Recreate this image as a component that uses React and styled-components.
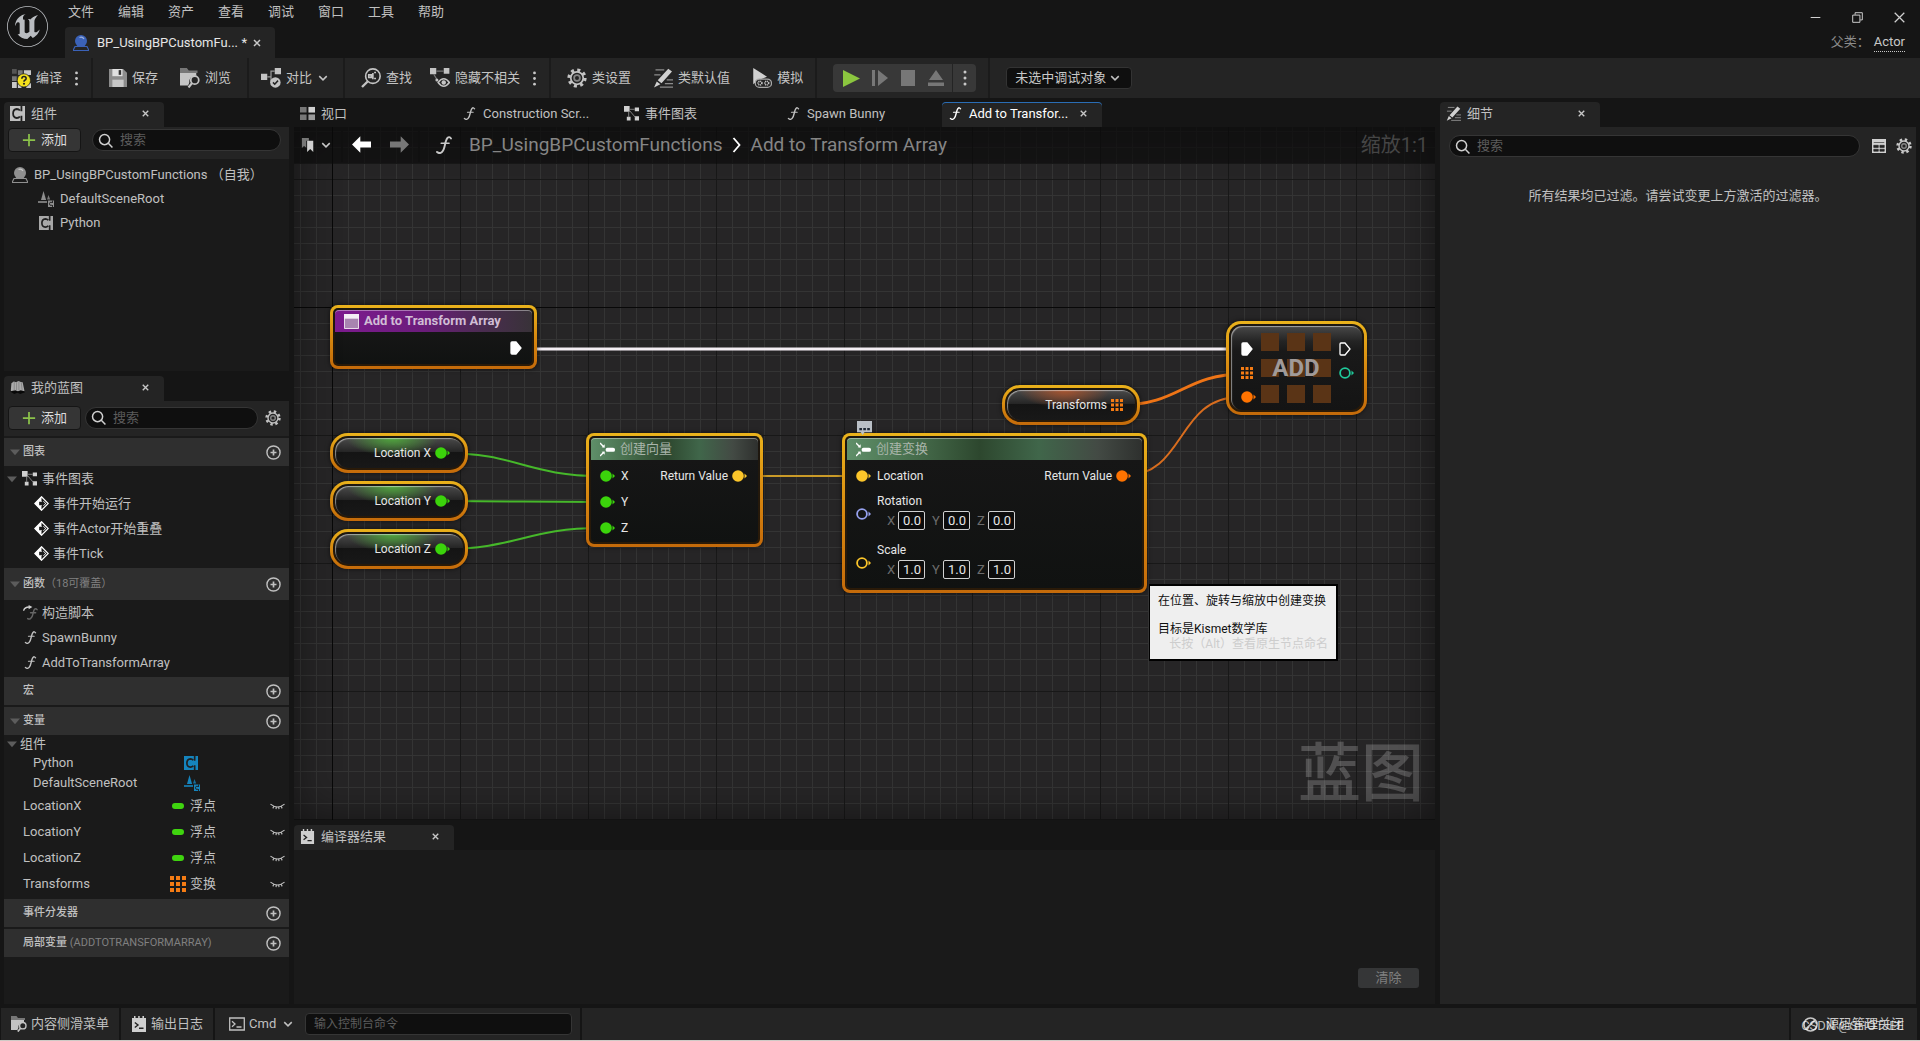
import React from 'react';
import styled, { createGlobalStyle, css } from 'styled-components';
import { SiUnrealengine } from 'react-icons/si';

const GlobalStyle = createGlobalStyle`
    *, *::before, *::after {
        box-sizing: border-box;
    }
    body {
        margin: 0;
        background: #151515;
        color: #c0c0c0;
        font-family: Roboto, 'Noto Sans CJK SC', sans-serif;
        font-size: 13px;
        line-height: 18px;
    }
    button, input, select {
        font: inherit;
        color: inherit;
        margin: 0;
    }
    button {
        display: inline-flex;
        align-items: center;
        padding: 0;
        border: 0;
        background: none;
        white-space: nowrap;
    }
    ul {
        list-style: none;
        margin: 0;
        padding: 0;
    }
    svg {
        display: block;
        flex: none;
    }
`;

/* ---------- icons ---------- */

const icons = {
    close: <path d="M4 4l8 8M12 4l-8 8" stroke="currentColor" strokeWidth="2" />,
    chevron: <path d="M3 5.5l5 5 5-5" fill="none" stroke="currentColor" strokeWidth="2" />,
    chevronRight: <path d="M4.500 1l6 7-6 7" fill="none" stroke="currentColor" strokeWidth="1.8" />,
    caret: <path d="M0 4h16L8 13z" fill="#5c5c5c" />,
    dots: (
        <g fill="currentColor">
            <circle cx="8" cy="2" r="1.5" />
            <circle cx="8" cy="8" r="1.5" />
            <circle cx="8" cy="14" r="1.5" />
        </g>
    ),
    plus: <path d="M8 1v14M1 8h14" stroke="#8bc24a" strokeWidth="2" />,
    search: (
        <g fill="none" stroke="currentColor" strokeWidth="1.6">
            <circle cx="7" cy="7" r="5.4" />
            <path d="M11 11l4.4 4.4" />
        </g>
    ),
    plusCircle: (
        <g fill="none" stroke="currentColor" strokeWidth="1.5">
            <circle cx="8" cy="8" r="7" />
            <path d="M8 4.8v6.4M4.8 8h6.4" strokeWidth="1.8" />
        </g>
    ),
    gear: (
        <g fill="none" stroke="currentColor">
            <circle cx="8" cy="8" r="6.4" strokeWidth="2.6" strokeDasharray="2.4 2.627" />
            <circle cx="8" cy="8" r="5" strokeWidth="1.4" />
            <circle cx="8" cy="8" r="2.3" strokeWidth="1.4" stroke="#858585" />
        </g>
    ),
    compile: (
        <g>
            <path d="M0 0h4v4H0z" fill="#555" />
            <path d="M5 1h4v4H5zM0 6h4v4H0z" fill="#777" />
            <path d="M10 1h6v4h-6zM0 11h4v5H0zM5 6h4v4H5zM12 12h4v4h-4zM5 12h3v4H5z" fill="#c8c8c8" />
            <circle cx="10" cy="9.6" r="5.6" fill="#f5e11c" stroke="#1e1e1e" strokeWidth=".6" />
            <path d="M8.3 8.3q0-1.9 1.8-1.9t1.8 1.6q0 1-1.1 1.5-.7.4-.7 1.2" fill="none" stroke="#222" strokeWidth="1.3" />
            <circle cx="10.1" cy="12.4" r=".9" fill="#222" />
        </g>
    ),
    save: (
        <g fill="#bdbdbd">
            <path d="M0 0h12.6L16 3.4V16H0z" fill="#8c8c8c" />
            <path d="M3 0h9v6.4H3z" fill="#e0e0e0" />
            <path d="M8.6 1h2.2v4.2H8.600z" fill="#333" />
            <path d="M3 9.5h10V16H3z" fill="#c8c8c8" />
        </g>
    ),
    browse: (
        <g>
            <path d="M0 0h5.5l1.5 2h7v2H0z" fill="#777" />
            <path d="M0 4h13v2.2A5 5 0 007.400 12l-1 2H0z" fill="#c4c4c4" />
            <circle cx="11.800" cy="9.700" r="3.200" fill="none" stroke="#c4c4c4" strokeWidth="1.400" />
            <path d="M9.500 12.200L6.800 15.600" stroke="#c4c4c4" strokeWidth="1.700" />
        </g>
    ),
    diff: (
        <g fill="#c4c4c4">
            <path d="M0 4.500h5v5H0zM11 0h5v5h-5z" />
            <path d="M5 7h3V2.500h3M8 7v4" fill="none" stroke="#9a9a9a" />
            <circle cx="11.500" cy="11.500" r="4.200" />
            <path d="M9.600 11.500l1.400 1.500 2.600-2.900" fill="none" stroke="#242424" strokeWidth="1.200" />
        </g>
    ),
    find: (
        <g fill="none" stroke="#c4c4c4" strokeWidth="1.300">
            <circle cx="9.500" cy="6.500" r="5.800" />
            <path d="M5.300 10.800L.8 15.200" strokeWidth="1.900" />
            <path d="M6.200 5.500h2v2h-2zM10.500 3.600h1.500M10.500 8.400h1.500M8.300 6.500h1.200v-2.500M9.500 6.500V9" />
        </g>
    ),
    hide: (
        <g fill="#c4c4c4">
            <path d="M0 0h5v5H0zM11 0h4.500v4.500H11z" />
            <path d="M5 2.500h6M3 5l3 5" stroke="#777" fill="none" />
            <circle cx="5.500" cy="9.500" r="1.200" />
            <path d="M6.500 11.600q4.500-6 9 0q-4.500 6-9 0z" fill="none" stroke="#c4c4c4" strokeWidth="1.200" />
            <circle cx="11" cy="11.600" r="1.800" />
        </g>
    ),
    pencil: (
        <g>
            <path d="M2 1.500h7M1 5.500h5M11 9.500h5M9.500 12.500h6.500M5.500 15.300H16" stroke="#8c8c8c" strokeWidth="1" />
            <path d="M12.200.5l3 2.300-8.400 9.400-3-2.400zM3 10.700l2.900 2.300L.8 15.600z" fill="#d0d0d0" />
        </g>
    ),
    simulate: (
        <g>
            <path d="M1 0l11 7-4 1.500L4.500 10 1 13z" fill="#d0d0d0" />
            <rect x="2.600" y="8.800" width="13" height="6.700" rx="3.300" fill="#242424" stroke="#a8a8a8" />
            <circle cx="6.400" cy="12.100" r="1.500" fill="none" stroke="#c8c8c8" strokeWidth="1.300" strokeDasharray=".8 .5" />
            <circle cx="11.800" cy="12.100" r="1.500" fill="none" stroke="#c8c8c8" strokeWidth="1.300" strokeDasharray=".8 .5" />
        </g>
    ),
    play: <path d="M0 0l16 8-16 8z" fill="#8bc63f" />,
    step: <path d="M0 0h3v16H0zM6 0l10 8-10 8z" fill="#777" />,
    stop: <path d="M1 0h14v16H1z" fill="#777" />,
    eject: <path d="M8 0l7 10H1zM0 12.500h16V16H0z" fill="#777" />,
    component: (
        <g>
            <path d="M0 0h16v16H0z" fill="currentColor" />
            <path d="M10.500 4.800Q9.300 3.200 7.300 3.200 3.300 3.500 3.300 8t4 4.800q2 0 3.200-1.600M12.200 0v5.500M12.200 16v-5.500" fill="none" stroke="#202020" strokeWidth="1.900" />
        </g>
    ),
    actor: (
        <g>
            <path d="M0 15.500l2-4h12l2 4z" fill="none" stroke="currentColor" strokeWidth="1.200" />
            <circle cx="8" cy="6" r="6" fill="currentColor" />
            <path d="M6.500 2.500q3-1.200 4.500 1.500" fill="none" stroke="#fff" strokeOpacity=".5" strokeWidth="1.200" />
        </g>
    ),
    scene: (
        <g fill="currentColor">
            <path d="M5.500 0l2.600 9H3z" />
            <path d="M10.500 4l1.700 4.500h-3.200zM0 10h9v2H0z" opacity=".8" />
            <path d="M10 9.500h6V16h-6z" />
            <path d="M14 11.400q-2.600-.8-2.600 1.400t2.600 1.500M14.500 9.500v2.500M14.500 16v-2" fill="none" stroke="#1c1c1c" strokeWidth=".9" />
        </g>
    ),
    book: (
        <g>
            <path d="M0 12l2-3h12l2 4-5 2-3-1.500L4.500 15z" fill="#080808" />
            <path d="M1.500 3.500L4 1.500l2.500.8L9 1l2.500 1 2 .5L15.500 12l-4-1.200-3 1.200-3-1.200L.8 12z" fill="#ababab" />
            <path d="M4.500 2v9M7 2.500V11M9.500 1.500V11M12 2.500l1 8.500" stroke="#7c7c7c" strokeWidth=".8" fill="none" />
        </g>
    ),
    graph: (
        <g fill="#d0d0d0">
            <path d="M0 0h6v6H0zM11.500 1.500H16v4h-4.500zM3 11.500h4v4H3zM11.500 11h4.500v4.500h-4.500z" />
            <path d="M6 3.500h5.500M5 6v6M6 5l6 7" stroke="#888" fill="none" />
        </g>
    ),
    viewport: (
        <g>
            <path d="M0 1h7v6H0zM0 9h7v6H0z" fill="#777" />
            <path d="M9 1h7v6H9z" fill="#d0d0d0" />
            <path d="M9 9h7v6H9z" fill="#999" />
        </g>
    ),
    fn: (
        <g fill="none" stroke="currentColor" strokeLinecap="round">
            <path d="M14.200 2.200Q12.800 0 11 1.800 9.800 3.200 8.800 8T6.200 14.200Q4 16.200 1.800 14.200" strokeWidth="1.700" />
            <path d="M5.500 6.500h7" strokeWidth="1.400" />
        </g>
    ),
    override: (
        <g fill="none" stroke="#666" strokeLinecap="round">
            <path d="M15 5Q13.500 3 12 5 11 7 10.500 10T8 14.500q-1.500 1-3 0M8 8.200h5.500" strokeWidth="1.500" />
            <path d="M.8 5.500Q2 2 7 2.200" stroke="#d0d0d0" strokeWidth="1.500" />
            <path d="M6 0l4 2.200L6 4.600z" fill="#d0d0d0" stroke="none" />
        </g>
    ),
    event: (
        <g>
            <path d="M8 .8L15.200 8 8 15.200.8 8z" fill="none" stroke="#fff" strokeWidth="1.300" />
            <path d="M8 .8V5.500h2.500L13 8l-2.500 2.500H8v4.700L.8 8z" fill="#fff" />
            <path d="M5.500 6.200h3V4.500L12 8l-3.500 3.500V9.800h-3z" fill="#1a1a1a" />
        </g>
    ),
    bookmark: (
        <g>
            <path d="M1 0h8v3H6v8l-2.500-2L1 11.500z" fill="#777" />
            <path d="M7 3h7v13l-3.500-3.500L7 16z" fill="#d0d0d0" />
        </g>
    ),
    back: <path d="M0 8l7-7v4.500h9v5H7V15z" fill="currentColor" />,
    forward: <path d="M16 8L9 1v4.500H0v5h9V15z" fill="currentColor" />,
    log: (
        <g>
            <path d="M1 2h2V0h1.500v2h2.700V0h1.500v2h2.700V0H13v2h2v14H1z" fill="#cfcfcf" />
            <path d="M3.800 6.500L7 9l-3.200 2.500M8 12.300h4.500" fill="none" stroke="#222" strokeWidth="1.400" />
        </g>
    ),
    terminal: (
        <g fill="none" stroke="currentColor" strokeWidth="1.300">
            <path d="M.7 2h14.600v12H.7z" />
            <path d="M3 5.300L6 8l-3 2.700M7.500 11h5" />
        </g>
    ),
    layout: (
        <g>
            <path d="M0 0h16v16H0z" fill="#d0d0d0" />
            <path d="M2 4h12M2 7.200h5.200v2.500H2zM9 7.200h5v2.500H9zM2 11.700h5.200v2.300H2zM9 11.700h5v2.300H9z" fill="#242424" stroke="#242424" strokeWidth=".7" />
        </g>
    ),
    minimize: <path d="M1 8h14" stroke="currentColor" strokeWidth="1.500" />,
    restore: <path d="M1 4.500h10.500V15H1zM4.500 4V1H15v10.500h-3" fill="none" stroke="currentColor" strokeWidth="1.400" />,
    exit: <path d="M1 1l14 14M15 1L1 15" stroke="currentColor" strokeWidth="1.800" />,
    eye: (
        <g fill="none" stroke="currentColor" strokeWidth="1.200">
            <path d="M.5 5.500q7.500 6 15 0M4 8l-1 2M6.700 8.800l-.3 2M9.300 8.800l.3 2M12 8l1 2" />
        </g>
    ),
    array: (
        <path
            d="M0 0h4v4H0zM6 0h4v4H6zM12 0h4v4h-4zM0 6h4v4H0zM6 6h4v4H6zM12 6h4v4h-4zM0 12h4v4H0zM6 12h4v4H6zM12 12h4v4h-4z"
            fill="#f57c14"
        />
    ),
    pill: <rect x="0" y="4" width="16" height="8" rx="4" fill="#3fd40f" />,
    off: (
        <g fill="none" stroke="currentColor" strokeWidth="1.700">
            <circle cx="8" cy="8" r="7" />
            <path d="M13 3L3 13" />
        </g>
    ),
    make: (
        <g fill="#fff" stroke="#fff">
            <path d="M0 1l4 4M0 15l4-4" strokeWidth="1.500" />
            <path d="M5 6V2.500L1.800 5.700zM5 10v3.500L1.800 10.300z" stroke="none" />
            <rect x="6" y="6" width="10" height="4.500" rx="2" stroke="none" />
        </g>
    ),
    entry: (
        <g>
            <path d="M.5.5h15v15H.500z" fill="#a884b0" stroke="#efe6f0" />
            <path d="M0 0h16v5H0z" fill="#f4eef5" />
        </g>
    ),
    bubble: (
        <g>
            <path d="M0 1h16v12H8l-2 3-2-3H0z" fill="#b9bfc6" />
            <path d="M2.500 8.500h2.800v2.500H2.500zM6.700 8.500h2.800v2.500H6.700zM10.900 8.500h2.800v2.500h-2.800z" fill="#1e2733" />
        </g>
    )
};

const Icon = ({ name, size = 16, color }) => (
    <svg width={size} height={size} viewBox="0 0 16 16" color={color} aria-hidden="true">
        {icons[name]}
    </svg>
);

const pinColors = {
    float: '#3bd40b',
    vector: '#fcc62a',
    rotator: '#97a2f0',
    transform: '#ff7300',
    int: '#1fc99a'
};

const Pin = ({ type, open }) => {
    if (type === 'exec') {
        return (
            <svg width="12" height="14" viewBox="0 0 12 14" aria-hidden="true">
                <path d="M1 2q0-1 1-1h4l5 6-5 6H2q-1 0-1-1z" fill={open ? 'none' : '#fff'} stroke="#fff" strokeWidth="1.3" />
            </svg>
        );
    }
    if (type === 'array') return <Icon name="array" size={12} />;
    const color = pinColors[type];
    return (
        <svg width="16" height="12" viewBox="0 0 16 12" aria-hidden="true">
            <circle cx="6" cy="6" r={open ? 4.9 : 5.8} fill={open ? 'none' : color} stroke={color} strokeWidth={open ? 1.8 : 0} />
            <path d="M12.500 3.500L15 6l-2.500 2.500z" fill={color} />
        </svg>
    );
};

/* ---------- window frame ---------- */

const Page = styled.div`
    display: flex;
    flex-direction: column;
    min-height: 100vh;
    border-bottom: 1px solid #cfcac6;
`;

const TitleBar = styled.header`
    display: flex;
    height: 58px;
    padding-left: 7px;
`;

const Logo = styled.div`
    width: 58px;
    padding-top: 6px;
    color: #b9bcc0;
`;

const TitleMain = styled.div`
    flex: 1;
`;

const Menu = styled.nav`
    display: flex;
    gap: 24px;
    height: 27px;
    padding: 3px 3px 0;
    align-items: flex-start;
`;

const FileTab = styled.div`
    display: flex;
    align-items: center;
    width: 210px;
    height: 31px;
    padding: 0 12px 0 8px;
    border-radius: 4px 4px 0 0;
    background: #242424;
    color: #e6e6e6;
`;

const FileName = styled.span`
    flex: 1;
    margin-left: 8px;
`;

const Dirty = styled.span`
    margin-right: 4px;
`;

const WindowInfo = styled.div`
    display: flex;
    flex-direction: column;
    align-items: flex-end;
    gap: 7px;
    padding: 9px 15px 0 0;
    color: #d0d0d0;
`;

const WindowButtons = styled.div`
    display: flex;
    gap: 31px;
    height: 17px;
`;

const ParentClass = styled.div`
    display: flex;
    gap: 4px;
    color: #8c8c8c;

    a {
        color: #c8c8c8;
        text-decoration: none;
        border-bottom: 1px dotted #c8c8c8;
    }
`;

const Toolbar = styled.div`
    display: flex;
    height: 40px;
    background: #242424;
`;

const ToolGroup = styled.div`
    display: flex;
    align-items: center;
    gap: ${({ $gap }) => $gap || 22}px;
    padding: 0 ${({ $end }) => $end || 12}px 0 ${({ $start }) => $start || 16}px;
    border-right: 2px solid #1b1b1b;
`;

const ToolButton = styled.button`
    gap: 5px;
    color: #c4c4c4;
`;

const DotsButton = styled.button`
    width: 6px;
    margin-left: -7px;
    justify-content: center;
    color: #c8c8c8;
`;

const PlayControls = styled.div`
    display: flex;
    align-items: center;
    gap: 12px;
    height: 28px;
    padding-left: 10px;
    border-radius: 4px;
    background: #383838;
`;

const PlayMore = styled.button`
    justify-content: center;
    width: 24px;
    height: 28px;
    margin-left: -4px;
    border-left: 1px solid #242424;
    color: #c8c8c8;
`;

const SelectBox = styled.label`
    position: relative;
    display: inline-flex;
    align-items: center;

    svg {
        position: absolute;
        right: ${({ $arrow }) => $arrow}px;
        pointer-events: none;
    }
`;

const DebugSelect = styled.select`
    appearance: none;
    width: 126px;
    height: 22px;
    padding: 0 8px;
    border: 1px solid #333;
    border-radius: 4px;
    background: #0f0f0f;
    color: #c8c8c8;
    line-height: 18px;
`;

const DebugArea = styled.div`
    display: flex;
    align-items: center;
    padding-left: 16px;
`;

/* ---------- panels ---------- */

const Workspace = styled.main`
    flex: 1;
    display: grid;
    grid-template-columns: 285px minmax(0, 1fr) 476px;
    gap: 5px;
    padding: 4px;
`;

const Column = styled.div`
    display: flex;
    flex-direction: column;
    gap: 5px;
    min-width: 0;
`;

const Panel = styled.section`
    display: flex;
    flex-direction: column;
    min-height: ${({ $height }) => ($height ? `${$height}px` : 0)};
    flex: ${({ $height }) => ($height ? 'none' : '1')};
`;

const PanelBody = styled.div`
    flex: 1;
    background: ${({ $light }) => ($light ? '#242424' : '#1a1a1a')};
`;

const BlueprintBody = styled(PanelBody)`
    padding-top: 2px;
`;

const TabStrip = styled.div`
    display: flex;
    gap: 2px;
    height: 25px;
`;

const TabBox = styled.button`
    width: 160px;
    height: 25px;
    padding: 0 13px 2px 5px;
    border-radius: 4px 4px 0 0;
    color: #c0c0c0;
    ${({ $active }) =>
        $active &&
        css`
            background: #242424;
        `}
    ${({ $focused }) =>
        $focused &&
        css`
            color: #fff;
            box-shadow: inset 0 1px #2a6db5;
        `}
`;

const TabIcon = styled.span`
    display: flex;
    justify-content: center;
    width: 16px;
    margin-right: 6px;
`;

const TabLabel = styled.span`
    flex: 1;
    text-align: left;
`;

const Tab = ({ icon, label, active, focused }) => (
    <TabBox $active={active} $focused={focused}>
        <TabIcon>
            <Icon name={icon} size={icon === 'fn' ? 13 : 15} />
        </TabIcon>
        <TabLabel>{label}</TabLabel>
        {active && <Icon name="close" size={11} color="#c8c8c8" />}
    </TabBox>
);

const SearchStrip = styled.div`
    display: flex;
    align-items: ${({ $tall }) => ($tall ? 'center' : 'flex-start')};
    height: ${({ $tall }) => ($tall ? 35 : 32)}px;
    padding: ${({ $tall }) => ($tall ? '0 8px 2px 4px' : '1px 8px 0 4px')};
    background: #242424;
`;

const AddButton = styled.button`
    flex: none;
    justify-content: center;
    gap: 5px;
    width: 73px;
    height: 24px;
    border: 1px solid #151515;
    border-radius: 4px;
    background: #353535;
    color: #dcdcdc;
`;

const SearchBox = styled.label`
    flex: 1;
    display: flex;
    align-items: center;
    min-width: 0;
    height: 22px;
    margin: ${({ $margin }) => $margin || '0'};
    padding: 0 5px;
    border: 1px solid #353535;
    border-radius: 11px;
    background: #0f0f0f;
    color: #d0d0d0;
`;

const SearchInput = styled.input`
    flex: 1;
    min-width: 0;
    margin-left: 7px;
    padding: 0;
    border: 0;
    outline: 0;
    background: none;

    &::placeholder {
        color: #5c5c5c;
        opacity: 1;
    }
`;

const Search = ({ margin }) => (
    <SearchBox $margin={margin}>
        <Icon name="search" size={15} />
        <SearchInput type="text" placeholder="搜索" aria-label="搜索" />
    </SearchBox>
);

const ComponentList = styled.ul`
    padding-top: 4px;
`;

const TreeRow = styled.li`
    display: flex;
    align-items: center;
    height: ${({ $height }) => $height || 25}px;
    padding-left: ${({ $indent }) => $indent || 0}px;
    gap: ${({ $gap }) => $gap || 4}px;
    white-space: nowrap;
`;

const Section = styled.section`
    margin-bottom: 2px;
`;

const SectionHeader = styled.h3`
    display: flex;
    align-items: center;
    gap: 3px;
    height: ${({ $tall }) => ($tall ? 32 : 28)}px;
    margin: 0;
    padding: 0 8px 0 6px;
    background: #2f2f2f;
    font-size: 11px;
    font-weight: 500;

    small {
        font-size: 11px;
        font-weight: 400;
        color: #808080;
    }
`;

const SectionTitle = styled.span`
    flex: 1;
`;

const CaretSlot = styled.span`
    width: 10px;
`;

const VariableName = styled.span`
    width: ${({ $width }) => $width}px;
`;

const TypeIcon = styled.span`
    display: flex;
    justify-content: center;
    width: 17px;
`;

const Visibility = styled.button`
    margin: 0 4px 0 auto;
`;

const BlueprintSection = ({ title, note, open, tall, children }) => (
    <Section>
        <SectionHeader $tall={tall}>
            <CaretSlot>{open && <Icon name="caret" size={10} />}</CaretSlot>
            <SectionTitle>
                {title}
                {note && <small>{note}</small>}
            </SectionTitle>
            <button aria-label={`添加${title}`}>
                <Icon name="plusCircle" size={15} />
            </button>
        </SectionHeader>
        {children && <ul>{children}</ul>}
    </Section>
);

/* ---------- graph ---------- */

const Canvas = styled.div`
    position: relative;
    flex: 1;
    overflow: hidden;
    background:
        linear-gradient(#080808, #080808) 38px 0 / 1px 100% no-repeat,
        linear-gradient(#080808, #080808) 0 180px / 100% 1px no-repeat,
        linear-gradient(90deg, #181818 1px, transparent 1px) 38px 0 / 128px 100%,
        linear-gradient(#181818 1px, transparent 1px) 0 52px / 100% 128px,
        linear-gradient(90deg, #343434 1px, transparent 1px) 6px 0 / 16px 100%,
        linear-gradient(#343434 1px, transparent 1px) 0 4px / 100% 16px,
        #262526;

    &::after {
        content: '';
        position: absolute;
        inset: 0;
        box-shadow: inset 0 0 40px rgba(0, 0, 0, 0.5);
        pointer-events: none;
    }
`;

const CanvasHeader = styled.div`
    position: relative;
    z-index: 2;
    display: flex;
    align-items: center;
    height: 37px;
    padding: 0 7px 2px;
    background: rgba(12, 12, 12, 0.7);
    font-size: 19px;
    line-height: 28px;
    color: #858585;
`;

const HeaderTools = styled.div`
    display: flex;
    align-items: center;
    gap: ${({ $gap }) => $gap}px;
    height: 34px;
    padding: 0 9px;
    border-right: 2px solid #101010;

    &:first-child {
        padding-left: 0;
    }
`;

const Crumbs = styled.div`
    display: flex;
    align-items: center;
    flex: 1;
    gap: 6px;
    padding-left: 15px;

    svg:first-child {
        margin-right: 10px;
    }
`;

const ZoomLevel = styled.span`
    font-size: 20px;
    color: #454545;
`;

const Wires = styled.svg`
    position: absolute;
    inset: 0;
    width: 100%;
    height: 100%;
    fill: none;
`;

const GraphName = styled.div`
    position: absolute;
    right: 11px;
    bottom: 6px;
    font-size: 63px;
    line-height: 80px;
    font-weight: 500;
    color: rgba(255, 255, 255, 0.2);
`;

const NodeBox = styled.div`
    position: absolute;
    left: ${({ $x }) => $x}px;
    top: ${({ $y }) => $y}px;
    width: ${({ $w }) => $w}px;
    padding: 2px;
    border: 3px solid transparent;
    border-radius: ${({ $round }) => $round || 8}px;
    background:
        linear-gradient(#1c1710, #2a1a08) padding-box,
        linear-gradient(#eab31c, #d98a10 50%, #c46a0a) border-box;
    box-shadow: 0 0 5px rgba(0, 0, 0, 0.6);
    color: #e6e6e6;
    font-size: 12px;
`;

const NodeHeader = styled.div`
    display: flex;
    align-items: center;
    gap: 5px;
    height: 22px;
    padding-left: 9px;
    border-radius: 4px 4px 0 0;
    box-shadow: inset 0 1px rgba(255, 255, 255, 0.4);
    color: ${({ $event }) => ($event ? '#d0bdd5' : '#a9b5aa')};
    font-size: 13px;
    font-weight: ${({ $event }) => ($event ? 700 : 400)};
    background: ${({ $event }) =>
        $event
            ? 'linear-gradient(90deg, #7d1b8f, #6b1c7b 45%, #4a2c50 75%, #383238)'
            : 'linear-gradient(90deg, #5f8f69, #4a7250 20%, #2d472e 45%, #40664a 65%, #434a44 85%, #2e302e)'};
`;

const NodeBody = styled.div`
    min-height: ${({ $min }) => $min || 0}px;
    padding: 3px 0 1px;
    border-radius: 0 0 4px 4px;
    background: linear-gradient(#161616, #101211);
`;

const PinRow = styled.div`
    display: flex;
    align-items: center;
    justify-content: space-between;
    height: 26px;
    padding: 0 10px 0 9px;
`;

const PinLabel = styled.span`
    display: flex;
    align-items: center;
    gap: ${({ $out }) => ($out ? 4 : 5)}px;
    margin-left: ${({ $out }) => ($out ? 'auto' : 0)};
`;

const StructPin = styled.div`
    display: flex;
    align-items: center;
    gap: 5px;
    height: 49px;
    padding-left: 9px;
`;

const StructFields = styled.div`
    padding-bottom: 4px;
`;

const StructLabel = styled.div`
    height: 18px;
    line-height: 17px;
`;

const AxisFields = styled.div`
    display: flex;
    gap: 7px;
    padding-left: 10px;
`;

const AxisField = styled.label`
    display: flex;
    align-items: center;
    color: #6c6c6c;
    font-size: 13px;

    span {
        width: 11px;
    }

    input {
        width: 27px;
        height: 19px;
        padding: 0 3px;
        border: 1px solid #d0d0d0;
        border-radius: 2px;
        background: #0c0c0c;
        color: #e6e6e6;
        text-align: right;
    }
`;

const VariableBody = styled.div`
    display: flex;
    align-items: center;
    justify-content: flex-end;
    gap: 4px;
    height: 30px;
    padding-right: 12px;
    border-radius: 13px;
    box-shadow: inset 1px 1px 1px rgba(255, 255, 255, 0.5);
    background:
        radial-gradient(ellipse 46px 18px at 45% 0, ${({ $tint }) => $tint}, transparent),
        linear-gradient(#4a4a4a, #262626 45%, #141414 46%, #181818);
`;

const AddBody = styled.div`
    display: flex;
    height: 84px;
    padding-left: 10px;
    border-radius: 11px;
    box-shadow: inset 1px 1px 1px rgba(255, 255, 255, 0.5);
    background: linear-gradient(#484848, #242424 18%, #191919 30%, #141414);
`;

const PinColumn = styled.div`
    display: flex;
    flex-direction: column;
    width: 20px;
    padding-top: 11px;

    span {
        display: flex;
        align-items: center;
        height: 24px;
    }
`;

const AddArt = styled.div`
    display: grid;
    align-items: center;
    justify-items: center;
    margin-right: 8px;

    > * {
        grid-area: 1 / 1;
    }
`;

const AddTitle = styled.strong`
    font-size: 24px;
    line-height: 28px;
    color: #a09a98;
`;

const Bubble = styled.div`
    position: absolute;
    left: 563px;
    top: 293px;
`;

const Tooltip = styled.div`
    position: absolute;
    z-index: 3;
    left: 855px;
    top: 457px;
    width: 189px;
    height: 77px;
    padding: 6px 8px;
    border: 2px solid #000;
    border-left-width: 1px;
    background: #efefef;
    color: #101010;
    font-size: 12px;
    line-height: 18px;

    p {
        margin: 0 0 10px;
    }

    small {
        display: block;
        margin-top: -13px;
        font-size: 12px;
        text-align: right;
        color: #cdcdcd;
    }
`;

const variableNodes = [
    { name: 'Location X', x: 36, y: 306 },
    { name: 'Location Y', x: 36, y: 354 },
    { name: 'Location Z', x: 36, y: 402 },
    { name: 'Transforms', x: 708, y: 258, array: true }
];

const VariableNode = ({ name, x, y, array }) => (
    <NodeBox $x={x} $y={y} $w={138} $round={18}>
        <VariableBody $tint={array ? '#a8542e' : '#4fa63c'}>
            {name}
            <Pin type={array ? 'array' : 'float'} />
        </VariableBody>
    </NodeBox>
);

const StructInput = ({ label, type, value }) => (
    <StructPin>
        <Pin type={type} open />
        <StructFields>
            <StructLabel>{label}</StructLabel>
            <AxisFields>
                {['X', 'Y', 'Z'].map(axis => (
                    <AxisField key={axis}>
                        <span>{axis}</span>
                        <input type="text" defaultValue={value} aria-label={`${label} ${axis}`} />
                    </AxisField>
                ))}
            </AxisFields>
        </StructFields>
    </StructPin>
);

const Graph = () => (
    <Canvas>
        <CanvasHeader>
            <HeaderTools $gap={5}>
                <Icon name="bookmark" size={14} color="#c8c8c8" />
                <Icon name="chevron" size={12} color="#c8c8c8" />
            </HeaderTools>
            <HeaderTools $gap={19}>
                <Icon name="back" size={19} color="#fff" />
                <Icon name="forward" size={19} color="#777" />
            </HeaderTools>
            <Crumbs>
                <Icon name="fn" size={18} color="#c8c8c8" />
                <span>BP_UsingBPCustomFunctions</span>
                <Icon name="chevronRight" size={16} color="#fff" />
                <span>Add to Transform Array</span>
            </Crumbs>
            <ZoomLevel>缩放1:1</ZoomLevel>
        </CanvasHeader>

        <GraphName>蓝图</GraphName>

        <Wires>
            <path d="M226 222H950" stroke="#f4eef4" strokeWidth="3" />
            <path d="M150 326C222 326 234 349 306 349" stroke="#46b82a" strokeWidth="2" />
            <path d="M150 374C222 374 234 375 306 375" stroke="#46b82a" strokeWidth="2" />
            <path d="M150 422C222 422 234 401 306 401" stroke="#46b82a" strokeWidth="2" />
            <path d="M446 349H564" stroke="#c99a28" strokeWidth="2" />
            <path d="M826 278C886 278 890 247 950 247" stroke="#ee7416" strokeWidth="3" />
            <path d="M830 349C892 349 882 270 946 270" stroke="#d96d1e" strokeWidth="2" />
        </Wires>

        <NodeBox $x={36} $y={178} $w={207}>
            <NodeHeader $event>
                <Icon name="entry" size={15} />
                Add to Transform Array
            </NodeHeader>
            <NodeBody $min={32}>
                <PinRow>
                    <PinLabel $out>
                        <Pin type="exec" />
                    </PinLabel>
                </PinRow>
            </NodeBody>
        </NodeBox>

        {variableNodes.map(node => (
            <VariableNode key={node.name} {...node} />
        ))}

        <NodeBox $x={292} $y={306} $w={177}>
            <NodeHeader>
                <Icon name="make" size={15} />
                创建向量
            </NodeHeader>
            <NodeBody>
                {['X', 'Y', 'Z'].map((axis, idx) => (
                    <PinRow key={axis}>
                        <PinLabel>
                            <Pin type="float" />
                            {axis}
                        </PinLabel>
                        {idx === 0 && (
                            <PinLabel $out>
                                Return Value
                                <Pin type="vector" />
                            </PinLabel>
                        )}
                    </PinRow>
                ))}
            </NodeBody>
        </NodeBox>

        <NodeBox $x={548} $y={306} $w={305}>
            <NodeHeader>
                <Icon name="make" size={15} />
                创建变换
            </NodeHeader>
            <NodeBody>
                <PinRow>
                    <PinLabel>
                        <Pin type="vector" />
                        Location
                    </PinLabel>
                    <PinLabel $out>
                        Return Value
                        <Pin type="transform" />
                    </PinLabel>
                </PinRow>
                <StructInput label="Rotation" type="rotator" value="0.0" />
                <StructInput label="Scale" type="vector" value="1.0" />
            </NodeBody>
        </NodeBox>
        <Bubble>
            <Icon name="bubble" size={15} />
        </Bubble>

        <NodeBox $x={932} $y={194} $w={141} $round={15}>
            <AddBody>
                <PinColumn>
                    <span><Pin type="exec" /></span>
                    <span><Pin type="array" /></span>
                    <span><Pin type="transform" /></span>
                </PinColumn>
                <AddArt>
                    <svg width="70" height="70" viewBox="0 0 70 70" fill="#5a3416" aria-hidden="true">
                        {[0, 26, 52].map(y => [0, 26, 52].map(x => <rect key={`${x}-${y}`} x={x} y={y} width="18" height="18" />))}
                    </svg>
                    <AddTitle>ADD</AddTitle>
                </AddArt>
                <PinColumn>
                    <span><Pin type="exec" open /></span>
                    <span><Pin type="int" open /></span>
                </PinColumn>
            </AddBody>
        </NodeBox>

        <Tooltip role="tooltip">
            <p>在位置、旋转与缩放中创建变换</p>
            <p>目标是Kismet数学库</p>
            <small>长按（Alt）查看原生节点命名</small>
        </Tooltip>
    </Canvas>
);

/* ---------- compiler results, details, status bar ---------- */

const ResultsBody = styled(PanelBody)`
    display: flex;
    align-items: flex-end;
    justify-content: flex-end;
    padding: 16px;
`;

const ClearButton = styled.button`
    justify-content: center;
    width: 61px;
    height: 20px;
    border-radius: 3px;
    background: #353637;
    color: #808080;
`;

const DetailsTools = styled.div`
    display: flex;
    align-items: center;
    gap: 10px;
    padding: 8px 4px 0 9px;
    color: #c8c8c8;
`;

const EmptyMessage = styled.p`
    margin: 30px 0 0;
    text-align: center;
`;

const StatusBar = styled.footer`
    display: flex;
    gap: 2px;
    height: 32px;
    padding: 0 3px 0 1px;
    background: #151515;
`;

const StatusItem = styled.div`
    display: flex;
    align-items: center;
    gap: ${({ $gap }) => $gap || 4}px;
    flex: ${({ $grow }) => ($grow ? 1 : 'none')};
    padding: 0 ${({ $end }) => $end || 10}px 0 ${({ $start }) => $start || 10}px;
    background: #242424;
    white-space: nowrap;
`;

const StatusButton = styled.button`
    gap: 4px;
`;

const CommandSelect = styled.select`
    appearance: none;
    width: 52px;
    padding: 0;
    border: 0;
    background: #242424;
`;

const CommandInput = styled.input`
    width: 267px;
    height: 22px;
    padding: 0 8px;
    border: 1px solid #353535;
    border-radius: 4px;
    background: #0f0f0f;
    font-size: 12px;

    &::placeholder {
        color: #5c5c5c;
        opacity: 1;
    }
`;

const SourceControl = styled(StatusItem)`
    position: relative;
    width: 126px;
    color: #c8c8c8;
`;

const Watermark = styled.span`
    position: absolute;
    right: 13px;
    top: 9px;
    font-size: 13px;
    color: rgba(255, 255, 255, 0.7);
`;

const menuItems = ['文件', '编辑', '资产', '查看', '调试', '窗口', '工具', '帮助'];

const variables = [
    { name: 'LocationX', type: '浮点', icon: 'pill' },
    { name: 'LocationY', type: '浮点', icon: 'pill' },
    { name: 'LocationZ', type: '浮点', icon: 'pill' },
    { name: 'Transforms', type: '变换', icon: 'array' }
];

const Tool = ({ icon, size = 20, children }) => (
    <ToolButton>
        <Icon name={icon} size={size} />
        {children}
    </ToolButton>
);

const More = () => (
    <DotsButton aria-label="更多选项">
        <Icon name="dots" size={15} />
    </DotsButton>
);

const App = () => (
    <Page>
        <GlobalStyle />
        <TitleBar>
            <Logo>
                <SiUnrealengine size={41} />
            </Logo>
            <TitleMain>
                <Menu>
                    {menuItems.map(item => (
                        <button key={item}>{item}</button>
                    ))}
                </Menu>
                <FileTab>
                    <Icon name="actor" size={16} color="#3b62b8" />
                    <FileName>BP_UsingBPCustomFu...</FileName>
                    <Dirty>*</Dirty>
                    <Icon name="close" size={12} color="#c8c8c8" />
                </FileTab>
            </TitleMain>
            <WindowInfo>
                <WindowButtons>
                    <button aria-label="最小化"><Icon name="minimize" size={11} /></button>
                    <button aria-label="还原"><Icon name="restore" size={11} /></button>
                    <button aria-label="关闭"><Icon name="exit" size={11} /></button>
                </WindowButtons>
                <ParentClass>
                    父类：<a href="#actor">Actor</a>
                </ParentClass>
            </WindowInfo>
        </TitleBar>

        <Toolbar>
            <ToolGroup $start={12} $gap={18}>
                <Tool icon="compile" size={19}>编译</Tool>
                <More />
            </ToolGroup>
            <ToolGroup $end={16}>
                <Tool icon="save" size={18}>保存</Tool>
                <Tool icon="browse">浏览</Tool>
            </ToolGroup>
            <ToolGroup $start={12} $end={14}>
                <ToolButton>
                    <Icon name="diff" size={20} />
                    对比
                    <Icon name="chevron" size={12} />
                </ToolButton>
            </ToolGroup>
            <ToolGroup $gap={18}>
                <Tool icon="find">查找</Tool>
                <Tool icon="hide">隐藏不相关</Tool>
                <More />
            </ToolGroup>
            <ToolGroup>
                <Tool icon="gear">类设置</Tool>
                <Tool icon="pencil">类默认值</Tool>
                <Tool icon="simulate">模拟</Tool>
            </ToolGroup>
            <ToolGroup>
                <PlayControls>
                    <button aria-label="播放"><Icon name="play" size={17} /></button>
                    <button aria-label="单步"><Icon name="step" size={16} /></button>
                    <button aria-label="停止"><Icon name="stop" size={16} /></button>
                    <button aria-label="弹出"><Icon name="eject" size={16} /></button>
                    <PlayMore aria-label="播放选项">
                        <Icon name="dots" size={16} />
                    </PlayMore>
                </PlayControls>
            </ToolGroup>
            <DebugArea>
                <SelectBox $arrow={11}>
                    <DebugSelect aria-label="调试对象">
                        <option>未选中调试对象</option>
                    </DebugSelect>
                    <Icon name="chevron" size={12} />
                </SelectBox>
            </DebugArea>
        </Toolbar>

        <Workspace>
            <Column>
                <Panel $height={269}>
                    <TabStrip>
                        <Tab icon="component" label="组件" active />
                    </TabStrip>
                    <SearchStrip>
                        <AddButton><Icon name="plus" size={14} />添加</AddButton>
                        <Search margin="1px 0 0 11px" />
                    </SearchStrip>
                    <PanelBody>
                        <ComponentList>
                            <TreeRow $height={24} $indent={8} $gap={6}>
                                <Icon name="actor" color="#8f8f8f" />
                                BP_UsingBPCustomFunctions （自我）
                            </TreeRow>
                            <TreeRow $height={24} $indent={34} $gap={6}>
                                <Icon name="scene" color="#8f8f8f" />
                                DefaultSceneRoot
                            </TreeRow>
                            <TreeRow $height={24} $indent={35} $gap={7}>
                                <Icon name="component" size={14} color="#a8a8a8" />
                                Python
                            </TreeRow>
                        </ComponentList>
                    </PanelBody>
                </Panel>

                <Panel>
                    <TabStrip>
                        <Tab icon="book" label="我的蓝图" active />
                    </TabStrip>
                    <SearchStrip $tall>
                        <AddButton><Icon name="plus" size={14} />添加</AddButton>
                        <Search margin="0 7px 0 4px" />
                        <button aria-label="设置"><Icon name="gear" /></button>
                    </SearchStrip>
                    <BlueprintBody>
                        <BlueprintSection title="图表" open>
                            <TreeRow $indent={3} $gap={5}>
                                <Icon name="caret" size={10} />
                                <Icon name="graph" size={15} />
                                事件图表
                            </TreeRow>
                            {['事件开始运行', '事件Actor开始重叠', '事件Tick'].map(event => (
                                <TreeRow key={event} $indent={30}>
                                    <Icon name="event" size={15} />
                                    {event}
                                </TreeRow>
                            ))}
                        </BlueprintSection>
                        <BlueprintSection title="函数" note="（18可覆盖）" open tall>
                            <TreeRow $indent={19}>
                                <Icon name="override" size={15} />
                                构造脚本
                            </TreeRow>
                            {['SpawnBunny', 'AddToTransformArray'].map(name => (
                                <TreeRow key={name} $indent={20} $gap={5}>
                                    <Icon name="fn" size={13} />
                                    {name}
                                </TreeRow>
                            ))}
                        </BlueprintSection>
                        <BlueprintSection title="宏" />
                        <BlueprintSection title="变量" open>
                            <TreeRow $height={18} $indent={3} $gap={3}>
                                <Icon name="caret" size={10} />
                                组件
                            </TreeRow>
                            <TreeRow $height={20} $indent={29} $gap={1}>
                                <VariableName $width={150}>Python</VariableName>
                                <Icon name="component" size={14} color="#1584bd" />
                            </TreeRow>
                            <TreeRow $height={20} $indent={29} $gap={1}>
                                <VariableName $width={150}>DefaultSceneRoot</VariableName>
                                <Icon name="scene" color="#1584bd" />
                            </TreeRow>
                            {variables.map(({ name, type, icon }) => (
                                <TreeRow key={name} $height={26} $indent={19}>
                                    <VariableName $width={142}>{name}</VariableName>
                                    <TypeIcon>
                                        <Icon name={icon} size={icon === 'pill' ? 12 : 16} />
                                    </TypeIcon>
                                    {type}
                                    <Visibility aria-label={`${name} 可见性`}>
                                        <Icon name="eye" size={15} />
                                    </Visibility>
                                </TreeRow>
                            ))}
                        </BlueprintSection>
                        <BlueprintSection title="事件分发器" />
                        <BlueprintSection title="局部变量" note=" (ADDTOTRANSFORMARRAY)" />
                    </BlueprintBody>
                </Panel>
            </Column>

            <Column>
                <Panel>
                    <TabStrip>
                        <Tab icon="viewport" label="视口" />
                        <Tab icon="fn" label="Construction Scr..." />
                        <Tab icon="graph" label="事件图表" />
                        <Tab icon="fn" label="Spawn Bunny" />
                        <Tab icon="fn" label="Add to Transfor..." active focused />
                    </TabStrip>
                    <Graph />
                </Panel>
                <Panel $height={179}>
                    <TabStrip>
                        <Tab icon="log" label="编译器结果" active />
                    </TabStrip>
                    <ResultsBody>
                        <ClearButton>清除</ClearButton>
                    </ResultsBody>
                </Panel>
            </Column>

            <Panel>
                <TabStrip>
                    <Tab icon="pencil" label="细节" active />
                </TabStrip>
                <PanelBody $light>
                    <DetailsTools>
                        <Search margin="0 2px 0 0" />
                        <button aria-label="属性矩阵"><Icon name="layout" size={14} /></button>
                        <button aria-label="设置"><Icon name="gear" /></button>
                    </DetailsTools>
                    <EmptyMessage>所有结果均已过滤。请尝试变更上方激活的过滤器。</EmptyMessage>
                </PanelBody>
            </Panel>
        </Workspace>

        <StatusBar>
            <StatusItem>
                <StatusButton><Icon name="browse" size={16} />内容侧滑菜单</StatusButton>
            </StatusItem>
            <StatusItem>
                <StatusButton><Icon name="log" size={16} />输出日志</StatusButton>
            </StatusItem>
            <StatusItem $start={14} $end={8}>
                <Icon name="terminal" size={16} />
                <SelectBox $arrow={7}>
                    <CommandSelect aria-label="命令类型">
                        <option>Cmd</option>
                    </CommandSelect>
                    <Icon name="chevron" size={12} />
                </SelectBox>
                <CommandInput type="text" placeholder="输入控制台命令" aria-label="输入控制台命令" />
            </StatusItem>
            <StatusItem $grow />
            <SourceControl $gap={8} $start={12}>
                <Icon name="off" size={15} />
                源码管理关闭
                <Watermark>CSDN @SHOTJEE</Watermark>
            </SourceControl>
        </StatusBar>
    </Page>
);

export default App;
